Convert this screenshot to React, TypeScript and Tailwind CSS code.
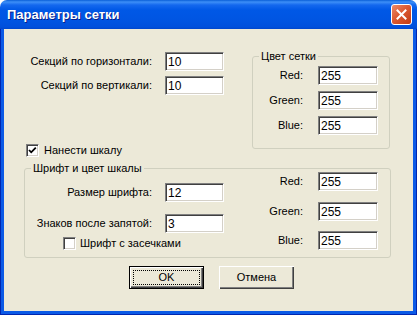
import React from "react";

function Field({ value, w }: { value: string; w: string }) {
  return (
    <div
      className={`${w} h-[19px] bg-white border-t border-l border-r border-b border-t-[#808080] border-l-[#808080] border-r-white border-b-white shadow-[inset_1px_1px_0_#404040,inset_-1px_-1px_0_#d4d0c8] text-[12px] leading-[17px] pl-[2px] pt-[1px] text-black`}
    >
      {value}
    </div>
  );
}

function Check({ checked }: { checked: boolean }) {
  return (
    <div className="w-[13px] h-[13px] shrink-0 bg-white border-t border-l border-r border-b border-t-[#808080] border-l-[#808080] border-r-white border-b-white shadow-[inset_1px_1px_0_#404040,inset_-1px_-1px_0_#d4d0c8] flex items-center justify-center">
      {checked && (
        <svg width="11" height="11" viewBox="0 0 11 11">
          <polyline points="2,5 4.2,7.3 8.8,2.6" fill="none" stroke="#000" strokeWidth="1.8" />
        </svg>
      )}
    </div>
  );
}

function Btn({ label, def }: { label: string; def?: boolean }) {
  if (def) {
    return (
      <div className="w-[75px] h-[23px] border border-black bg-[#ece9d8] shadow-[inset_1px_1px_0_#ffffff,inset_-1px_-1px_0_#404040,inset_-2px_-2px_0_#808080] p-[3px]">
        <div className="w-full h-full border border-dotted border-black flex items-center justify-center text-[11px] leading-[13px] text-black">
          {label}
        </div>
      </div>
    );
  }
  return (
    <div className="w-[75px] h-[23px] bg-[#ece9d8] shadow-[inset_1px_1px_0_#ffffff,inset_-1px_-1px_0_#404040,inset_-2px_-2px_0_#808080] flex items-center justify-center text-[11px] leading-[13px] text-black">
      {label}
    </div>
  );
}

export default function App() {
  return (
    <div className="w-[417px] h-[315px] flex flex-col font-['Liberation_Sans',Arial,sans-serif] bg-white">
      {/* Title bar */}
      <div className="h-[29px] shrink-0 rounded-t-[7px] bg-[linear-gradient(to_bottom,#0a5fd8_0px,#3d8ff7_2px,#1468ee_5px,#0058e6_10px,#0055e2_20px,#0050dc_27px,#0046cc_29px)] flex items-center justify-between pl-[7px] pr-[5px]">
        <span className="text-white font-bold text-[13px] leading-[16px] [text-shadow:1px_1px_0_#0a1f8a] mt-[1px]">
          Параметры сетки
        </span>
        <div className="w-[21px] h-[21px] rounded-[3px] border border-white bg-[linear-gradient(135deg,#eb8a6a_0%,#dc5a32_45%,#c13a12_100%)] flex items-center justify-center">
          <svg width="11" height="11" viewBox="0 0 11 11">
            <path d="M1.5 1.5 L9.5 9.5 M9.5 1.5 L1.5 9.5" stroke="#fff" strokeWidth="2" strokeLinecap="square" />
          </svg>
        </div>
      </div>

      {/* Frame */}
      <div className="flex-1 flex bg-[#0a4fd8] px-[1px] pb-[1px] shadow-[inset_1px_0_0_#0026b0,inset_-1px_0_0_#0026b0,inset_0_-1px_0_#0026b0]">
        <div className="flex-1 flex border-l-[3px] border-r-[3px] border-b-[3px] border-[#0b5ae6]">
          <div className="flex-1 bg-[#ece9d8] flex flex-col text-[11px] leading-[13px] text-black">
            {/* Top section */}
            <div className="flex items-start">
              <div className="w-[248px] flex flex-col pt-[23px]">
                <div className="flex items-center gap-[13px]">
                  <span className="w-[148px] text-right">Секций по горизонтали:</span>
                  <Field value="10" w="w-[59px]" />
                </div>
                <div className="flex items-center gap-[13px] mt-[5px]">
                  <span className="w-[148px] text-right">Секций по вертикали:</span>
                  <Field value="10" w="w-[59px]" />
                </div>
                <div className="flex items-center gap-[5px] mt-[49px] ml-[22px]">
                  <Check checked />
                  <span>Нанести шкалу</span>
                </div>
              </div>

              <div className="relative mt-[27px] w-[138px] h-[93px] border border-[#d0d0bf] rounded-[3px] flex flex-col pt-[9px]">
                <span className="absolute left-[6px] top-[-7px] px-[2px] bg-[#ece9d8]">Цвет сетки</span>
                <div className="flex items-center gap-[15px]">
                  <span className="w-[50px] text-right">Red:</span>
                  <Field value="255" w="w-[60px]" />
                </div>
                <div className="flex items-center gap-[15px] mt-[6px]">
                  <span className="w-[50px] text-right">Green:</span>
                  <Field value="255" w="w-[60px]" />
                </div>
                <div className="flex items-center gap-[15px] mt-[6px]">
                  <span className="w-[50px] text-right">Blue:</span>
                  <Field value="255" w="w-[60px]" />
                </div>
              </div>
            </div>

            {/* Group 2 */}
            <div className="relative mt-[11px] ml-[20px] w-[367px] h-[90px] border border-[#d0d0bf] rounded-[3px] flex items-start">
              <span className="absolute left-[6px] top-[-7px] px-[2px] bg-[#ece9d8]">Шрифт и цвет шкалы</span>
              <div className="w-[199px] flex flex-col pt-[14px]">
                <div className="flex items-center gap-[13px]">
                  <span className="w-[127px] text-right">Размер шрифта:</span>
                  <Field value="12" w="w-[59px]" />
                </div>
                <div className="flex items-center gap-[13px] mt-[12px]">
                  <span className="w-[127px] text-right">Знаков после запятой:</span>
                  <Field value="3" w="w-[59px]" />
                </div>
                <div className="flex items-center gap-[4px] mt-[4px] ml-[38px]">
                  <Check checked={false} />
                  <span>Шрифт с засечками</span>
                </div>
              </div>
              <div className="ml-[19px] flex flex-col pt-[3px]">
                <div className="flex items-center gap-[15px]">
                  <span className="w-[60px] text-right">Red:</span>
                  <Field value="255" w="w-[60px]" />
                </div>
                <div className="flex items-center gap-[15px] mt-[11px]">
                  <span className="w-[60px] text-right">Green:</span>
                  <Field value="255" w="w-[60px]" />
                </div>
                <div className="flex items-center gap-[15px] mt-[10px]">
                  <span className="w-[60px] text-right">Blue:</span>
                  <Field value="255" w="w-[60px]" />
                </div>
              </div>
            </div>

            {/* Buttons */}
            <div className="flex gap-[15px] mt-[8px] pl-[125px]">
              <Btn label="OK" def />
              <Btn label="Отмена" />
            </div>
          </div>
        </div>
      </div>
    </div>
  );
}
